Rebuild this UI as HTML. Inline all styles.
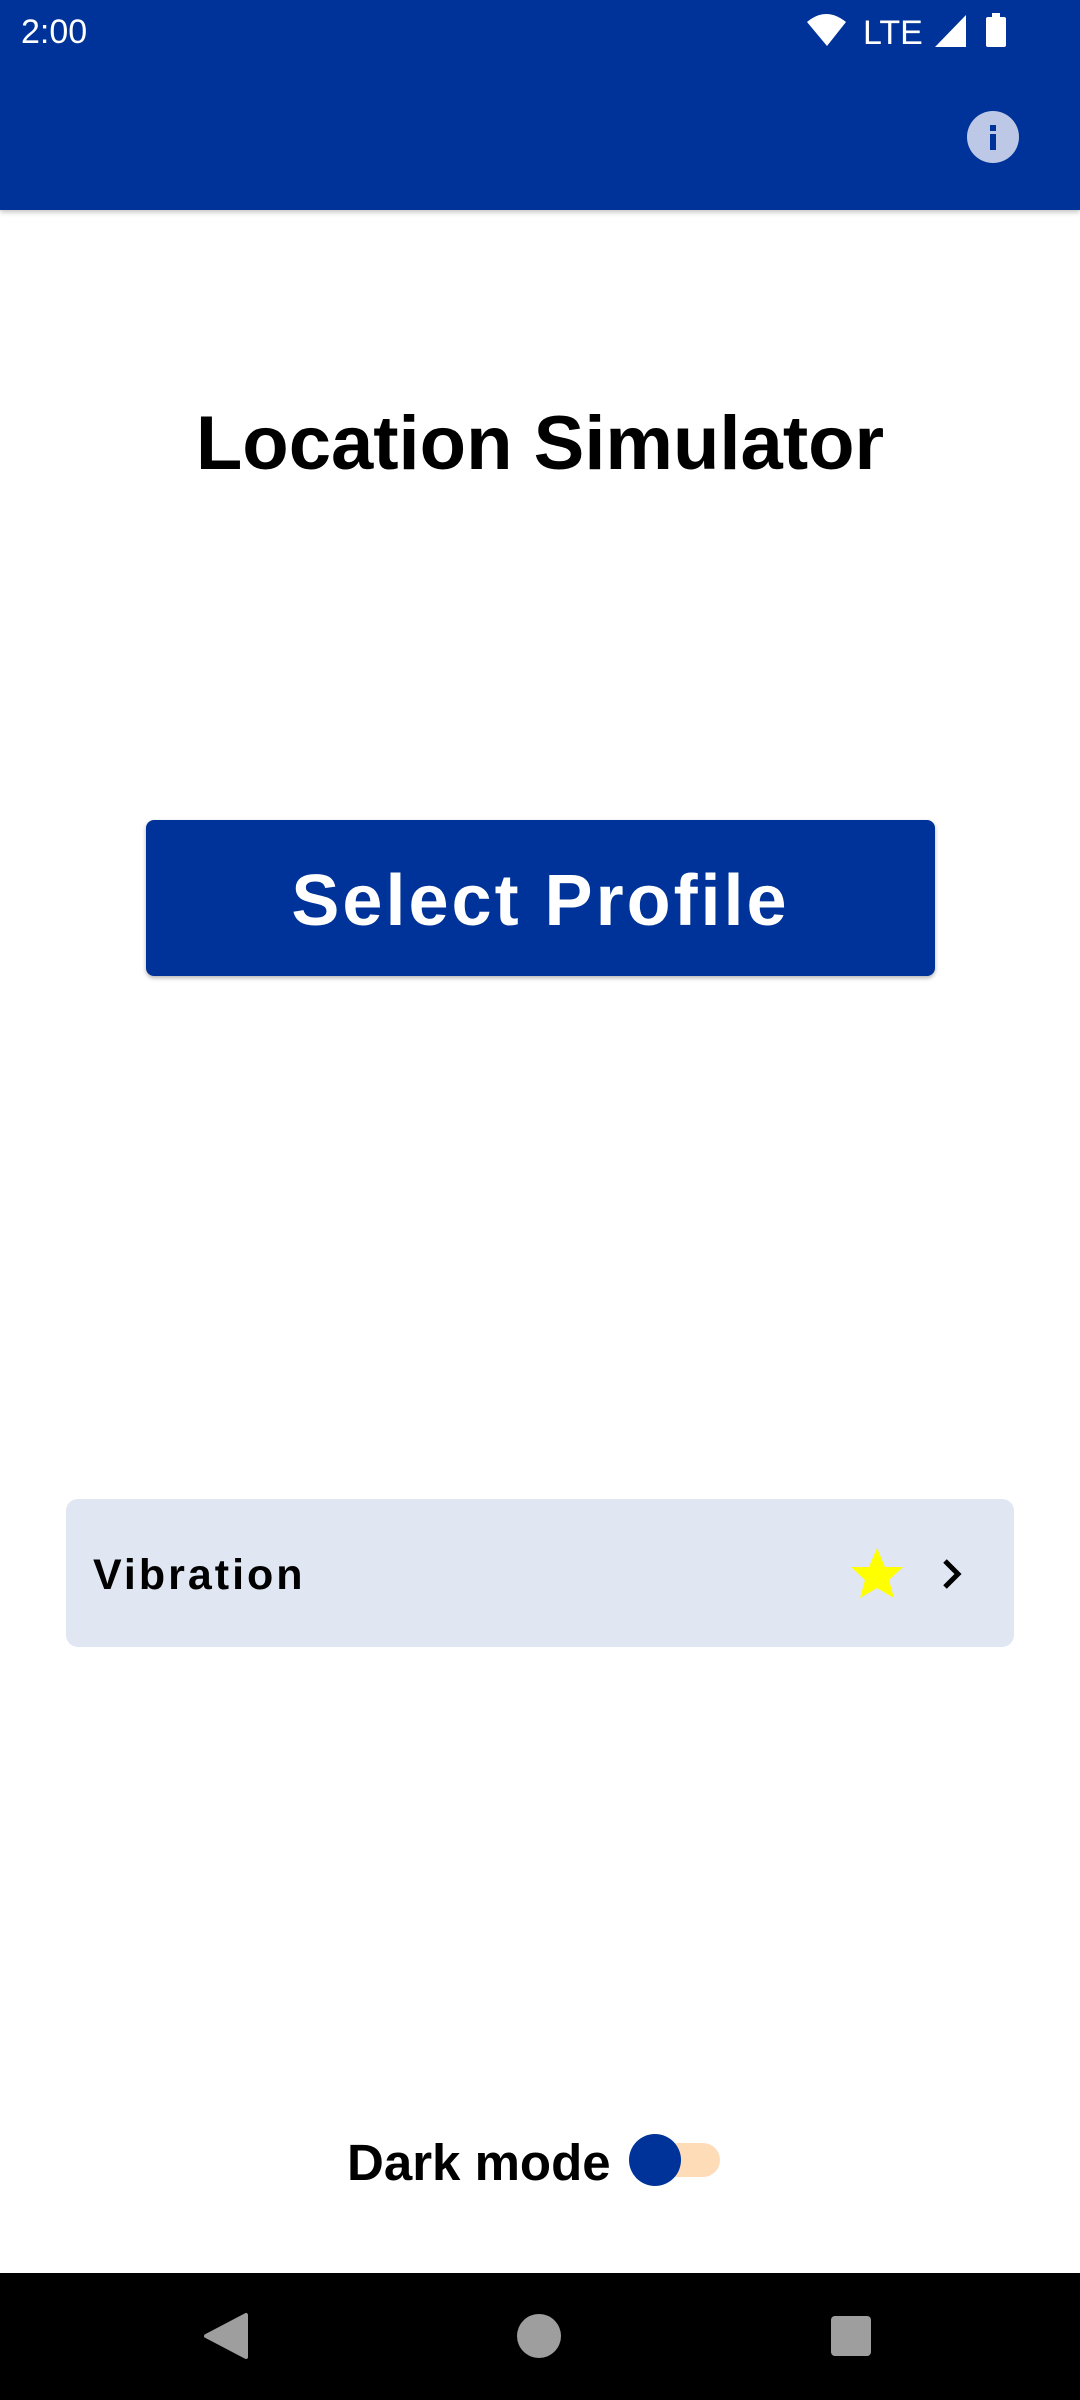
<!DOCTYPE html>
<html><head><meta charset="utf-8"><style>
*{margin:0;padding:0;box-sizing:border-box}
body{width:1080px;height:2400px;position:relative;background:#fff;font-family:"Liberation Sans",Roboto,sans-serif;overflow:hidden}
.top{position:absolute;left:0;top:0;width:1080px;height:210px;background:#003399;box-shadow:0 2px 5px rgba(0,0,0,.25)}
.abs{position:absolute}
</style></head><body>
<div class="top"></div>
<div class="abs" style="left:21px;top:13px;color:#fff;font-size:34px">2:00</div>
<svg class="abs" style="left:0;top:0" width="1080" height="210">
<path d="M807 22 Q826 6 846 22 L827 46 Z" fill="#fff"/>
<text x="863" y="44" fill="#fff" font-family="Liberation Sans" font-size="34">LTE</text>
<path d="M935 47 L966 15 L966 47 Z" fill="#fff"/>
<rect x="986" y="17" width="20" height="30" rx="2" fill="#fff"/><rect x="992" y="13" width="8" height="5" fill="#fff"/>
<circle cx="993" cy="137" r="26" fill="#bcc8e6"/>
<rect x="990" y="125" width="6" height="6" fill="#003399"/><rect x="990" y="134" width="6" height="16" fill="#003399"/>
</svg>
<div class="abs" style="left:0;width:1080px;top:400px;text-align:center;font-size:76px;font-weight:bold;color:#000">Location Simulator</div>
<div class="abs" style="left:146px;top:820px;width:789px;height:156px;background:#003399;border-radius:8px;box-shadow:0 2px 4px rgba(0,0,0,.3);color:#fff;font-size:72px;font-weight:bold;letter-spacing:3px;text-align:center;line-height:162px">Select Profile</div>
<div class="abs" style="left:66px;top:1499px;width:948px;height:148px;background:#e0e6f2;border-radius:12px"></div>
<div class="abs" style="left:93px;top:1551px;font-size:43px;font-weight:bold;letter-spacing:3px;color:#000">Vibration</div>
<svg class="abs" style="left:0;top:1500px" width="1080" height="150">
<polygon points="877,48 885,67 903,67 889,80 894,98 877,88 860,98 865,80 851,67 869,67" fill="#ffff00"/>
<path d="M945 61 L958 74 L945 87" stroke="#000" stroke-width="5" fill="none"/>
</svg>
<div class="abs" style="left:347px;top:2133px;font-size:51px;font-weight:bold;color:#000">Dark mode</div>
<div class="abs" style="left:660px;top:2143px;width:60px;height:34px;border-radius:17px;background:#ffdcb8"></div>
<div class="abs" style="left:629px;top:2134px;width:52px;height:52px;border-radius:50%;background:#003399"></div>
<div class="abs" style="left:0;top:2273px;width:1080px;height:127px;background:#000"></div>
<svg class="abs" style="left:0;top:2273px" width="1080" height="127">
<path d="M206 63 L246 42 L246 84 Z" fill="#9e9e9e" stroke="#9e9e9e" stroke-width="4" stroke-linejoin="round"/>
<circle cx="539" cy="63" r="22" fill="#9e9e9e"/>
<rect x="831" y="43" width="40" height="40" rx="4" fill="#9e9e9e"/>
</svg>
</body></html>
